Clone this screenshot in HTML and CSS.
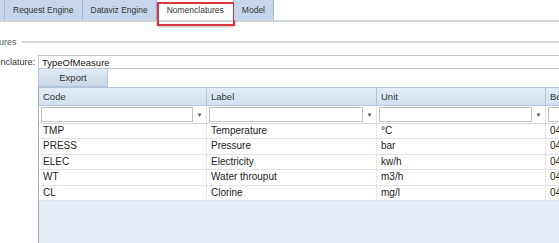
FILE: index.html
```html
<!DOCTYPE html>
<html>
<head>
    <title>Nomenclatures</title>
    <link rel="stylesheet" href="styles.css">
</head>
<body>
    <div class="tabs">
        <div class="tab-stub"></div>
        <div class="tab">Request Engine</div>
        <div class="tab">Dataviz Engine</div>
        <div class="tab active">Nomenclatures<span class="highlight"></span></div>
        <div class="tab">Model</div>
    </div>

    <div class="legend-row">
        <span class="legend">Nomenclatures</span>
        <span class="legend-line"></span>
    </div>

    <div class="form-row">
        <label class="field-label">Nomenclature:</label>
        <div class="field-input">TypeOfMeasure</div>
    </div>

    <div class="toolbar">
        <button class="btn">Export</button>
    </div>

    <div class="grid">
        <div class="grid-head">
            <div class="cell">Code</div>
            <div class="cell">Label</div>
            <div class="cell">Unit</div>
            <div class="cell">Begin</div>
        </div>
        <div class="grid-filter">
            <div class="fcell"><span class="finput"></span><span class="farrow">&#9660;</span></div>
            <div class="fcell"><span class="finput"></span><span class="farrow">&#9660;</span></div>
            <div class="fcell"><span class="finput"></span><span class="farrow">&#9660;</span></div>
            <div class="fcell"><span class="finput"></span><span class="farrow">&#9660;</span></div>
        </div>
        <div class="grid-body">
            <div class="row"><div class="cell">TMP</div><div class="cell">Temperature</div><div class="cell">°C</div><div class="cell">04/01/2016</div></div>
            <div class="row"><div class="cell">PRESS</div><div class="cell">Pressure</div><div class="cell">bar</div><div class="cell">04/01/2016</div></div>
            <div class="row"><div class="cell">ELEC</div><div class="cell">Electricity</div><div class="cell">kw/h</div><div class="cell">04/01/2016</div></div>
            <div class="row"><div class="cell">WT</div><div class="cell">Water throuput</div><div class="cell">m3/h</div><div class="cell">04/01/2016</div></div>
            <div class="row"><div class="cell">CL</div><div class="cell">Clorine</div><div class="cell">mg/l</div><div class="cell">04/01/2016</div></div>
        </div>
    </div>
</body>
</html>
```

FILE: styles.css
```css
html, body {
    margin: 0;
    padding: 0;
    width: 559px;
    height: 243px;
    overflow: hidden;
    background: #fff;
}
body {
    font-family: "Liberation Sans", Arial, sans-serif;
    font-size: 10px;
    color: #222;
}

/* tab strip */
.tabs {
    display: flex;
    height: 20px;
    border-bottom: 2px solid #cfd4db;
}
.tab-stub {
    width: 4px;
    background: #c6d6ec;
    border-right: 1px solid #a7bad5;
}
.tab {
    position: relative;
    padding: 0 8px;
    line-height: 20px;
    font-size: 8.5px;
    color: #333;
    background: #c6d6ec;
    border-right: 1px solid #a7bad5;
}
.tab.active {
    background: #fff;
    margin-left: 1px;
    padding: 0 9px;
}
.highlight {
    position: absolute;
    left: -1px;
    top: 2px;
    right: -2px;
    height: 24px;
    border: 2px solid #d8373f;
    box-sizing: border-box;
    box-shadow: 0 1px 2px rgba(0,0,0,0.25);
}

/* fieldset legend */
.legend-row {
    display: flex;
    align-items: center;
    margin-top: 15px;
    height: 10px;
}
.legend {
    margin-left: -44px;
    color: #555;
    font-size: 9px;
}
.legend-line {
    flex: 1;
    margin-left: 5px;
    border-top: 2px solid #d3d6da;
}

/* nomenclature field */
.form-row {
    display: flex;
    align-items: center;
    margin-top: 8px;
    height: 14px;
}
.field-label {
    width: 62px;
    margin-left: -27px;
    flex-shrink: 0;
    color: #333;
    font-size: 9px;
    text-align: right;
    white-space: nowrap;
}
.field-input {
    margin-left: 3px;
    flex: 1;
    height: 14px;
    line-height: 13px;
    box-sizing: border-box;
    border: 1px solid #c3c7cc;
    border-right: none;
    padding-left: 3px;
    font-size: 9.5px;
    color: #111;
}

.toolbar {
    padding-left: 38px;
    height: 18px;
}
.btn {
    display: block;
    width: 70px;
    height: 18px;
    margin: 0;
    padding: 0;
    border: 1px solid #b4c4da;
    border-top: none;
    background: linear-gradient(#e1eaf6, #c9d8ec);
    font-family: inherit;
    font-size: 9.5px;
    color: #333;
}

/* grid */
.grid {
    margin-left: 38px;
    height: 156px;
    border-left: 1px solid #a3afbf;
    background: #e4ecf8;
    display: flex;
    flex-direction: column;
}
.grid-head, .grid-filter, .row {
    display: grid;
    grid-template-columns: 168px 170px 169px 169px;
}
.grid-head {
    height: 19px;
    background: linear-gradient(#e3ecf7, #d3e0f1);
    border-top: 1px solid #b4c4da;
    border-bottom: 1px solid #b9c6d8;
    box-sizing: border-box;
}
.grid-head .cell {
    line-height: 17px;
    padding-left: 4px;
    border-right: 1px solid #b4c4da;
    color: #333;
    font-size: 9.5px;
}
.grid-filter {
    height: 18px;
    background: #fff;
    border-bottom: 1px solid #d5d8dc;
    box-sizing: border-box;
}
.fcell {
    display: flex;
    align-items: center;
    padding-left: 2px;
    border-right: 1px solid #e3e3e3;
}
.finput {
    flex: 1;
    height: 15px;
    box-sizing: border-box;
    border: 1px solid #bfc3c8;
}
.farrow {
    width: 13px;
    text-align: center;
    font-size: 6px;
    color: #555;
}
.grid-body {
    background: #fff;
}
.row {
    height: 15.4px;
    box-sizing: border-box;
    border-bottom: 1px solid #e1e3e6;
}
.row .cell {
    line-height: 14px;
    padding-left: 4px;
    border-right: 1px dotted #d5d8dc;
    white-space: nowrap;
    overflow: hidden;
    font-size: 10px;
}
```
